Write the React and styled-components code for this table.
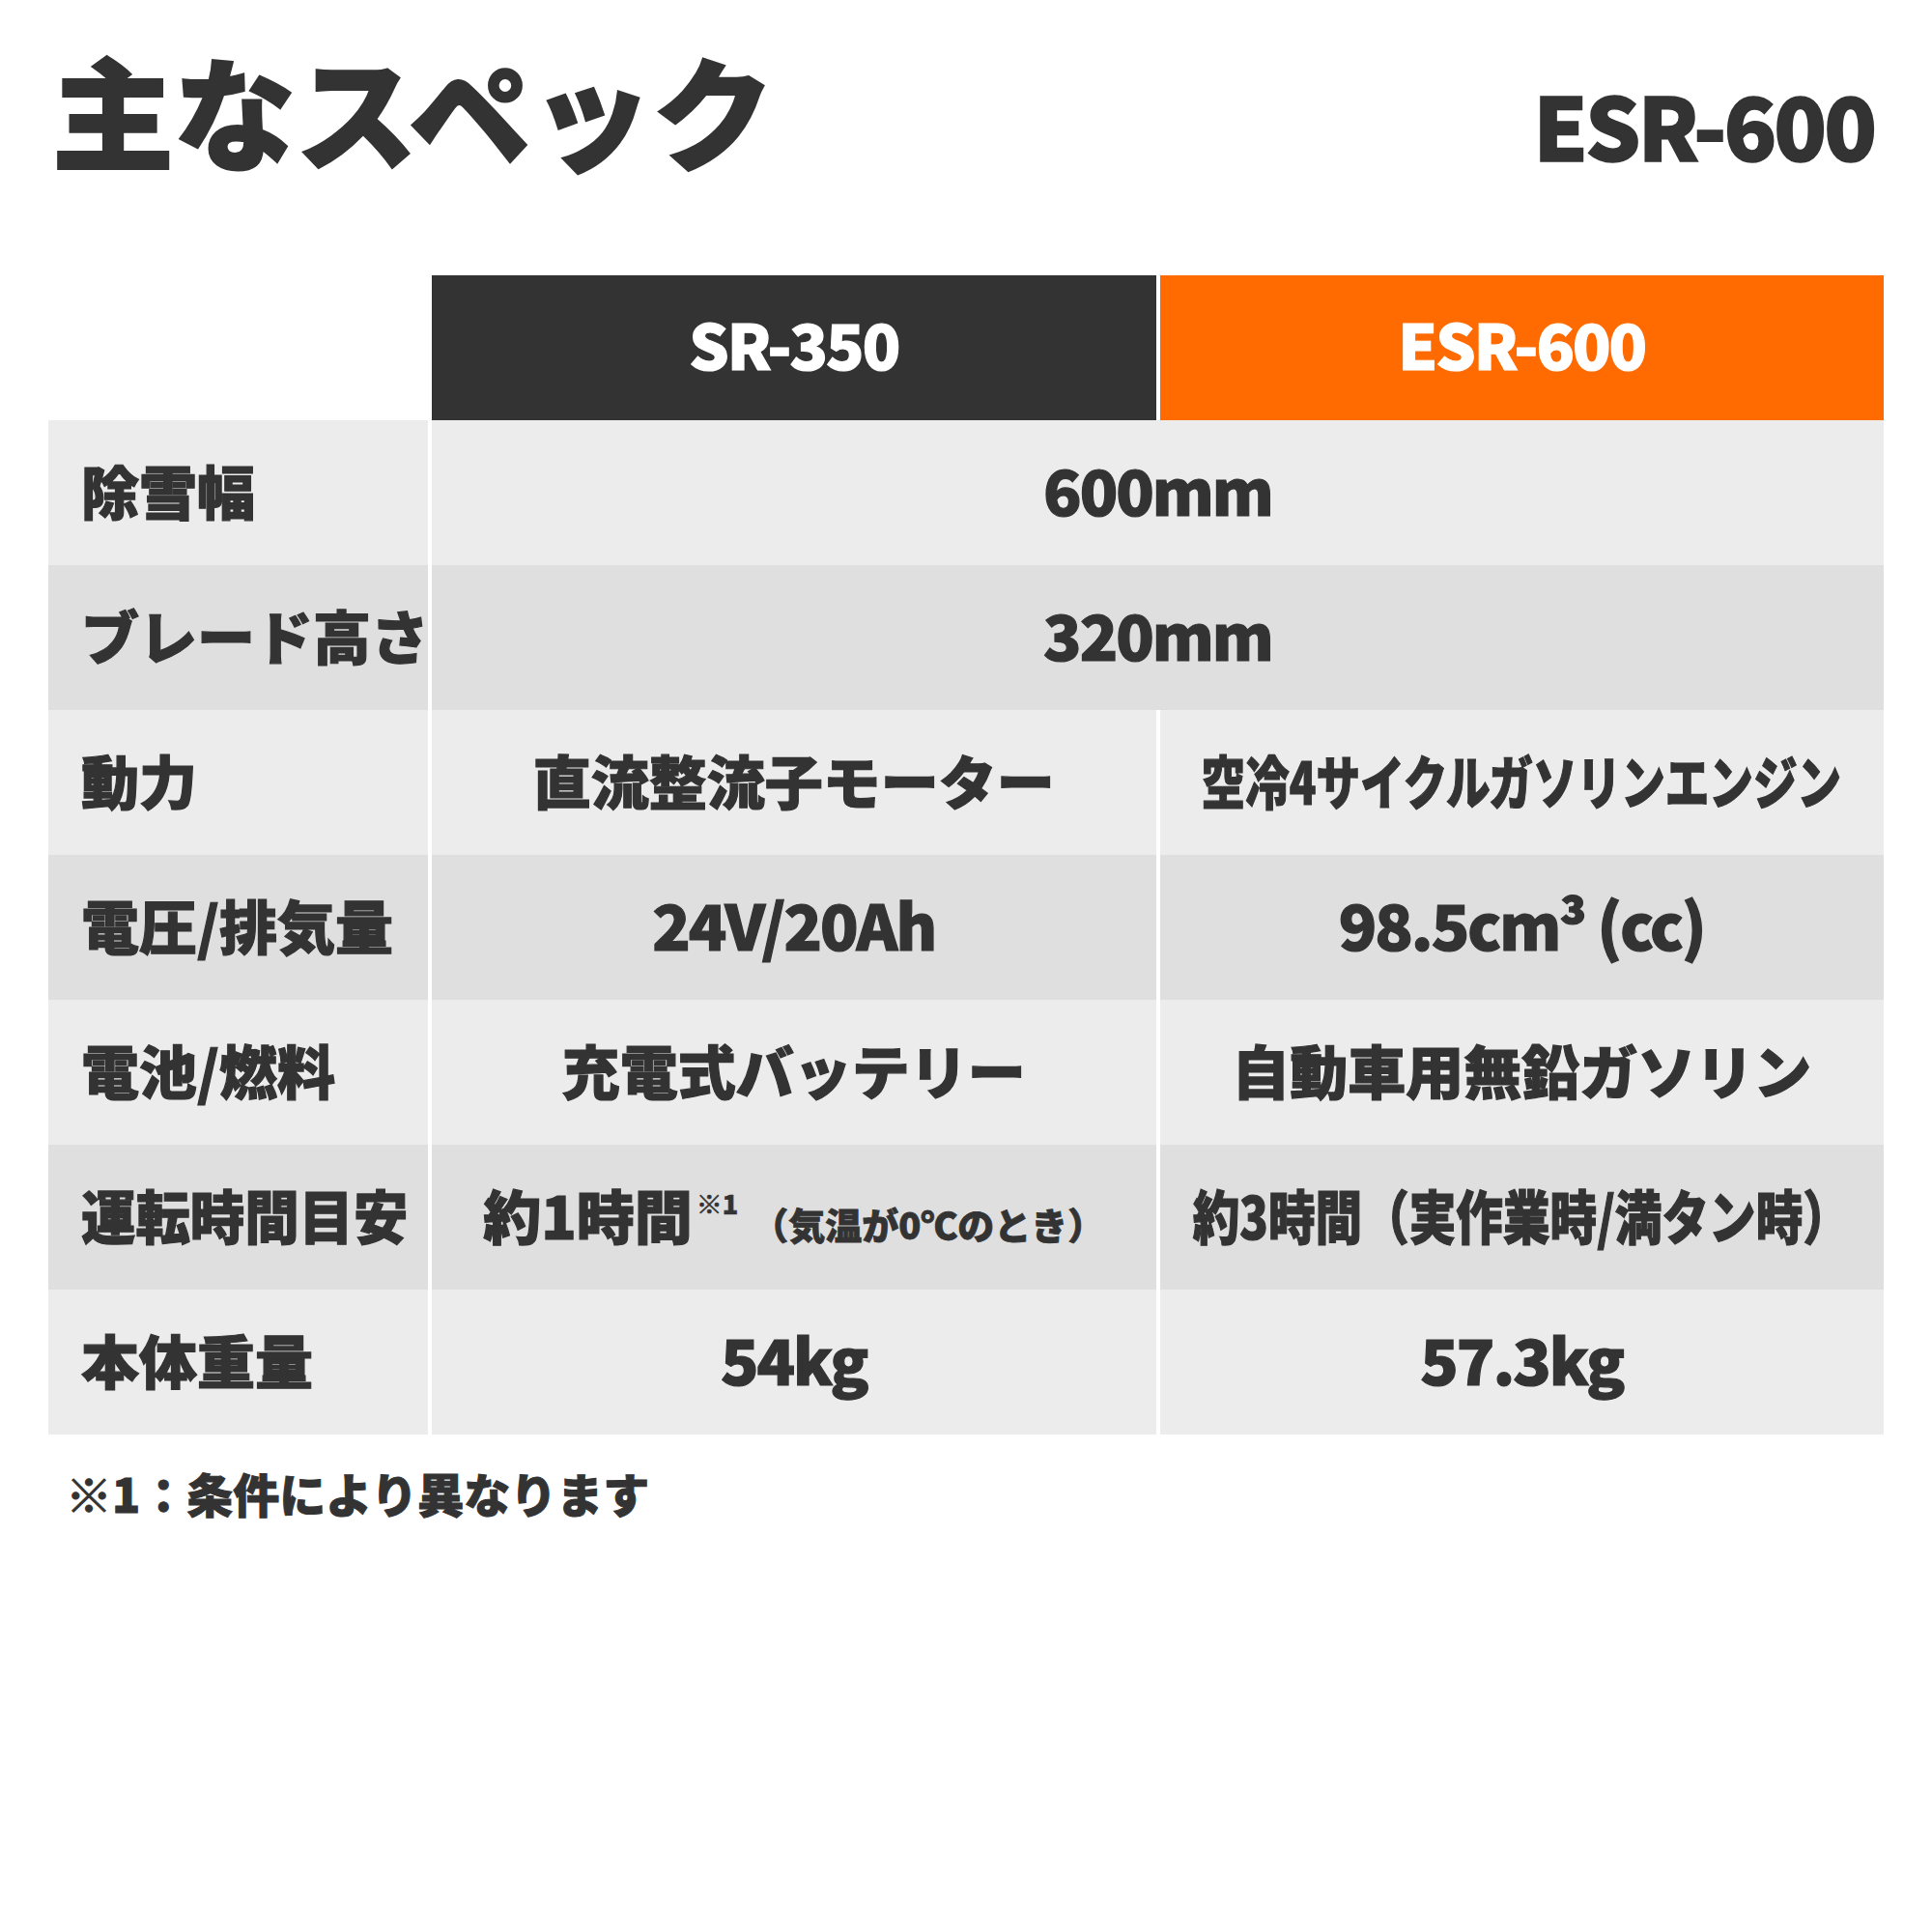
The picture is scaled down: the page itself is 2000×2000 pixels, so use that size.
import React from 'react';
import styled, { createGlobalStyle } from 'styled-components';

const GlobalStyle = createGlobalStyle`
  html, body, #root {
    margin: 0;
    padding: 0;
    background: #fff;
  }
  body {
    font-family: 'Noto Sans CJK JP', 'Noto Sans', sans-serif;
    color: #333;
  }
`;

const Page = styled.div`
  width: 2000px;
  height: 2000px;
  box-sizing: border-box;
  padding: 0 50px;
`;

const TitleRow = styled.header`
  height: 285px;
  box-sizing: border-box;
  padding: 49px 10px 0 4px;
  display: flex;
  justify-content: space-between;
  align-items: baseline;
`;

const Title = styled.h1`
  margin: 0;
  font-size: 126px;
  line-height: 1;
  font-weight: 900;
  color: #333;
  -webkit-text-stroke: 2px #333;
`;

const Model = styled.div`
  font-size: 90px;
  line-height: 1;
  font-weight: 900;
  letter-spacing: -3px;
  color: #333;
  -webkit-text-stroke: 1.5px #333;
`;

const Table = styled.div`
  display: grid;
  grid-template-columns: 393px minmax(0, 1fr) minmax(0, 1fr);
  column-gap: 4px;
`;

const Blank = styled.div`
  height: 150px;
`;

const HeadCell = styled.div`
  height: 150px;
  box-sizing: border-box;
  padding-bottom: 10px;
  display: flex;
  align-items: center;
  justify-content: center;
  background: ${(p) => (p.$accent ? '#ff6b00' : '#333333')};
  color: #fff;
  font-size: 65px;
  font-weight: 900;
  letter-spacing: -2px;
  -webkit-text-stroke: 1.2px #fff;
`;

const LabelCell = styled.div`
  height: 150px;
  box-sizing: border-box;
  padding: 0 0 8px 34px;
  display: flex;
  align-items: center;
  background: ${(p) => (p.$alt ? '#dfdfdf' : '#ececec')};
  font-size: 60px;
  font-weight: 900;
  white-space: nowrap;
  -webkit-text-stroke: 1.2px #333;
`;

const ValueCell = styled.div`
  grid-column: span ${(p) => p.$span || 1};
  height: 150px;
  box-sizing: border-box;
  padding-bottom: 8px;
  display: flex;
  align-items: center;
  justify-content: center;
  background: ${(p) => (p.$alt ? '#dfdfdf' : '#ececec')};
  font-size: ${(p) => (p.$latin ? '65px' : '60px')};
  letter-spacing: ${(p) => (p.$latin ? '-2px' : '0')};
  font-weight: 900;
  white-space: nowrap;
  -webkit-text-stroke: 1.2px #333;
`;

const Squeeze = styled.span`
  display: inline-block;
  transform: scaleX(${(p) => p.$x});
  transform-origin: ${(p) => (p.$left ? 'left center' : 'center')};
`;

const Sup = styled.span`
  font-size: 27px;
  vertical-align: 26px;
  margin-left: 4px;
  -webkit-text-stroke: 0.6px #333;
`;

const Note = styled.span`
  font-size: 38px;
  margin-left: 14px;
  -webkit-text-stroke: 0.8px #333;
`;

const Footnote = styled.p`
  margin: 36px 0 0 18px;
  font-size: 48px;
  font-weight: 900;
  line-height: 1;
  -webkit-text-stroke: 1px #333;
`;

const rows = [
  { label: '除雪幅', span: '600mm', latin: true },
  { label: 'ブレード高さ', span: '320mm', latin: true },
  { label: '動力', a: '直流整流子モーター', b: '空冷4サイクルガソリンエンジン', bx: 0.76 },
  { label: '電圧/排気量', a: '24V/20Ah', b: '98.5cm³ (cc)', latin: true },
  { label: '電池/燃料', a: '充電式バッテリー', b: '自動車用無鉛ガソリン' },
  { label: '運転時間目安', lx: 0.94, a: 'time', b: '約3時間（実作業時/満タン時）', bx: 0.81 },
  { label: '本体重量', a: '54kg', b: '57.3kg', latin: true },
];

function RunTime() {
  return (
    <span>
      約1時間<Sup>※1</Sup>
      <Note>（気温が0℃のとき）</Note>
    </span>
  );
}

export default function App() {
  return (
    <>
      <GlobalStyle />
      <Page>
        <TitleRow>
          <Title>主なスペック</Title>
          <Model>ESR-600</Model>
        </TitleRow>

        <Table>
          <Blank />
          <HeadCell>SR-350</HeadCell>
          <HeadCell $accent>ESR-600</HeadCell>

          {rows.map((r, i) => {
            const alt = i % 2 === 1;
            return (
              <React.Fragment key={r.label}>
                <LabelCell $alt={alt}>
                  {r.lx ? (
                    <Squeeze $x={r.lx} $left>
                      {r.label}
                    </Squeeze>
                  ) : (
                    r.label
                  )}
                </LabelCell>
                {r.span ? (
                  <ValueCell $alt={alt} $span={2} $latin={r.latin}>
                    {r.span}
                  </ValueCell>
                ) : (
                  <>
                    <ValueCell $alt={alt} $latin={r.latin}>
                      {r.a === 'time' ? <RunTime /> : r.a}
                    </ValueCell>
                    <ValueCell $alt={alt} $latin={r.latin}>
                      {r.bx ? <Squeeze $x={r.bx}>{r.b}</Squeeze> : r.b}
                    </ValueCell>
                  </>
                )}
              </React.Fragment>
            );
          })}
        </Table>

        <Footnote>※1：条件により異なります</Footnote>
      </Page>
    </>
  );
}
